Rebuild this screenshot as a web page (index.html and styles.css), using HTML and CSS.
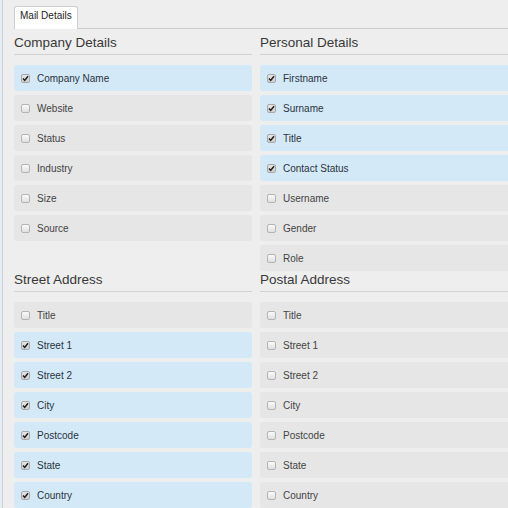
FILE: index.html
```html
<!DOCTYPE html>
<html>
<head>
<meta charset="utf-8">
<link rel="stylesheet" href="styles.css">
</head>
<body>
<div class="app">
  <div class="edge"></div>
  <div class="main">
    <div class="tabs">
      <div class="tab">Mail Details</div>
    </div>
    <div class="content">
      <section class="section">
        <h3>Company Details</h3>
        <div class="rows">
          <div class="row on"><span class="cb"><svg viewBox="0 0 9 9"><path d="M2 4.6 L3.7 6.4 L7 2.2"/></svg></span>Company Name</div>
          <div class="row"><span class="cb"></span>Website</div>
          <div class="row"><span class="cb"></span>Status</div>
          <div class="row"><span class="cb"></span>Industry</div>
          <div class="row"><span class="cb"></span>Size</div>
          <div class="row"><span class="cb"></span>Source</div>
        </div>
      </section>
      <section class="section">
        <h3>Personal Details</h3>
        <div class="rows">
          <div class="row on"><span class="cb"><svg viewBox="0 0 9 9"><path d="M2 4.6 L3.7 6.4 L7 2.2"/></svg></span>Firstname</div>
          <div class="row on"><span class="cb"><svg viewBox="0 0 9 9"><path d="M2 4.6 L3.7 6.4 L7 2.2"/></svg></span>Surname</div>
          <div class="row on"><span class="cb"><svg viewBox="0 0 9 9"><path d="M2 4.6 L3.7 6.4 L7 2.2"/></svg></span>Title</div>
          <div class="row on"><span class="cb"><svg viewBox="0 0 9 9"><path d="M2 4.6 L3.7 6.4 L7 2.2"/></svg></span>Contact Status</div>
          <div class="row"><span class="cb"></span>Username</div>
          <div class="row"><span class="cb"></span>Gender</div>
          <div class="row"><span class="cb"></span>Role</div>
        </div>
      </section>
      <section class="section">
        <h3>Street Address</h3>
        <div class="rows">
          <div class="row"><span class="cb"></span>Title</div>
          <div class="row on"><span class="cb"><svg viewBox="0 0 9 9"><path d="M2 4.6 L3.7 6.4 L7 2.2"/></svg></span>Street 1</div>
          <div class="row on"><span class="cb"><svg viewBox="0 0 9 9"><path d="M2 4.6 L3.7 6.4 L7 2.2"/></svg></span>Street 2</div>
          <div class="row on"><span class="cb"><svg viewBox="0 0 9 9"><path d="M2 4.6 L3.7 6.4 L7 2.2"/></svg></span>City</div>
          <div class="row on"><span class="cb"><svg viewBox="0 0 9 9"><path d="M2 4.6 L3.7 6.4 L7 2.2"/></svg></span>Postcode</div>
          <div class="row on"><span class="cb"><svg viewBox="0 0 9 9"><path d="M2 4.6 L3.7 6.4 L7 2.2"/></svg></span>State</div>
          <div class="row on"><span class="cb"><svg viewBox="0 0 9 9"><path d="M2 4.6 L3.7 6.4 L7 2.2"/></svg></span>Country</div>
        </div>
      </section>
      <section class="section">
        <h3>Postal Address</h3>
        <div class="rows">
          <div class="row"><span class="cb"></span>Title</div>
          <div class="row"><span class="cb"></span>Street 1</div>
          <div class="row"><span class="cb"></span>Street 2</div>
          <div class="row"><span class="cb"></span>City</div>
          <div class="row"><span class="cb"></span>Postcode</div>
          <div class="row"><span class="cb"></span>State</div>
          <div class="row"><span class="cb"></span>Country</div>
        </div>
      </section>
    </div>
  </div>
</div>
</body>
</html>
```

FILE: styles.css
```css
html, body {
  margin: 0;
  padding: 0;
  overflow: hidden;
  background: #eeeeee;
  font-family: "Liberation Sans", Arial, sans-serif;
  color: #333;
}

.app {
  display: flex;
  min-height: 508px;
}

.edge {
  width: 2px;
  background: #e4eef6;
  border-right: 1px solid #cfcfcf;
  flex: none;
}

.main {
  flex: 1;
  padding-left: 11px;
  min-width: 0;
}

.tabs {
  display: flex;
  padding-top: 6px;
  border-bottom: 1px solid #cdcdcd;
}

.tab {
  background: #fff;
  border: 1px solid #cdcdcd;
  border-bottom: none;
  border-radius: 3px 3px 0 0;
  margin-bottom: -1px;
  padding: 0 5px 4px;
  font-size: 10px;
  line-height: 18px;
  color: #222;
  height: 18px;
}

.content {
  padding-top: 5px;
  display: grid;
  grid-template-columns: 238px 262px;
  column-gap: 8px;
  align-items: start;
}

.section h3 {
  margin: 0 0 10px;
  font-size: 13.5px;
  line-height: 17px;
  font-weight: normal;
  color: #383838;
  padding-bottom: 3px;
  border-bottom: 1px solid #d2d2d2;
}

.rows {
  display: flex;
  flex-direction: column;
  gap: 4px;
}

.row {
  display: flex;
  align-items: center;
  height: 26px;
  padding-left: 7px;
  padding-top: 1px;
  box-sizing: border-box;
  border-radius: 3px;
  background: #e6e6e6;
  font-size: 10px;
  color: #444;
}

.row.on {
  background: #d4e9f8;
  color: #2a3340;
}

.cb {
  width: 7px;
  height: 7px;
  border: 1px solid #b4b4b4;
  border-radius: 2px;
  background: linear-gradient(#fafafa, #e0e0e0);
  margin-right: 7px;
  margin-top: -1px;
  position: relative;
  flex: none;
}

.row.on .cb {
  background: linear-gradient(#e6e6e6, #cfcfcf);
  border-color: #a8a8a8;
}

.cb svg {
  position: absolute;
  left: -1px;
  top: -1px;
  width: 9px;
  height: 9px;
}

.cb svg path {
  fill: none;
  stroke: #1e1e1e;
  stroke-width: 1.5;
}
```
